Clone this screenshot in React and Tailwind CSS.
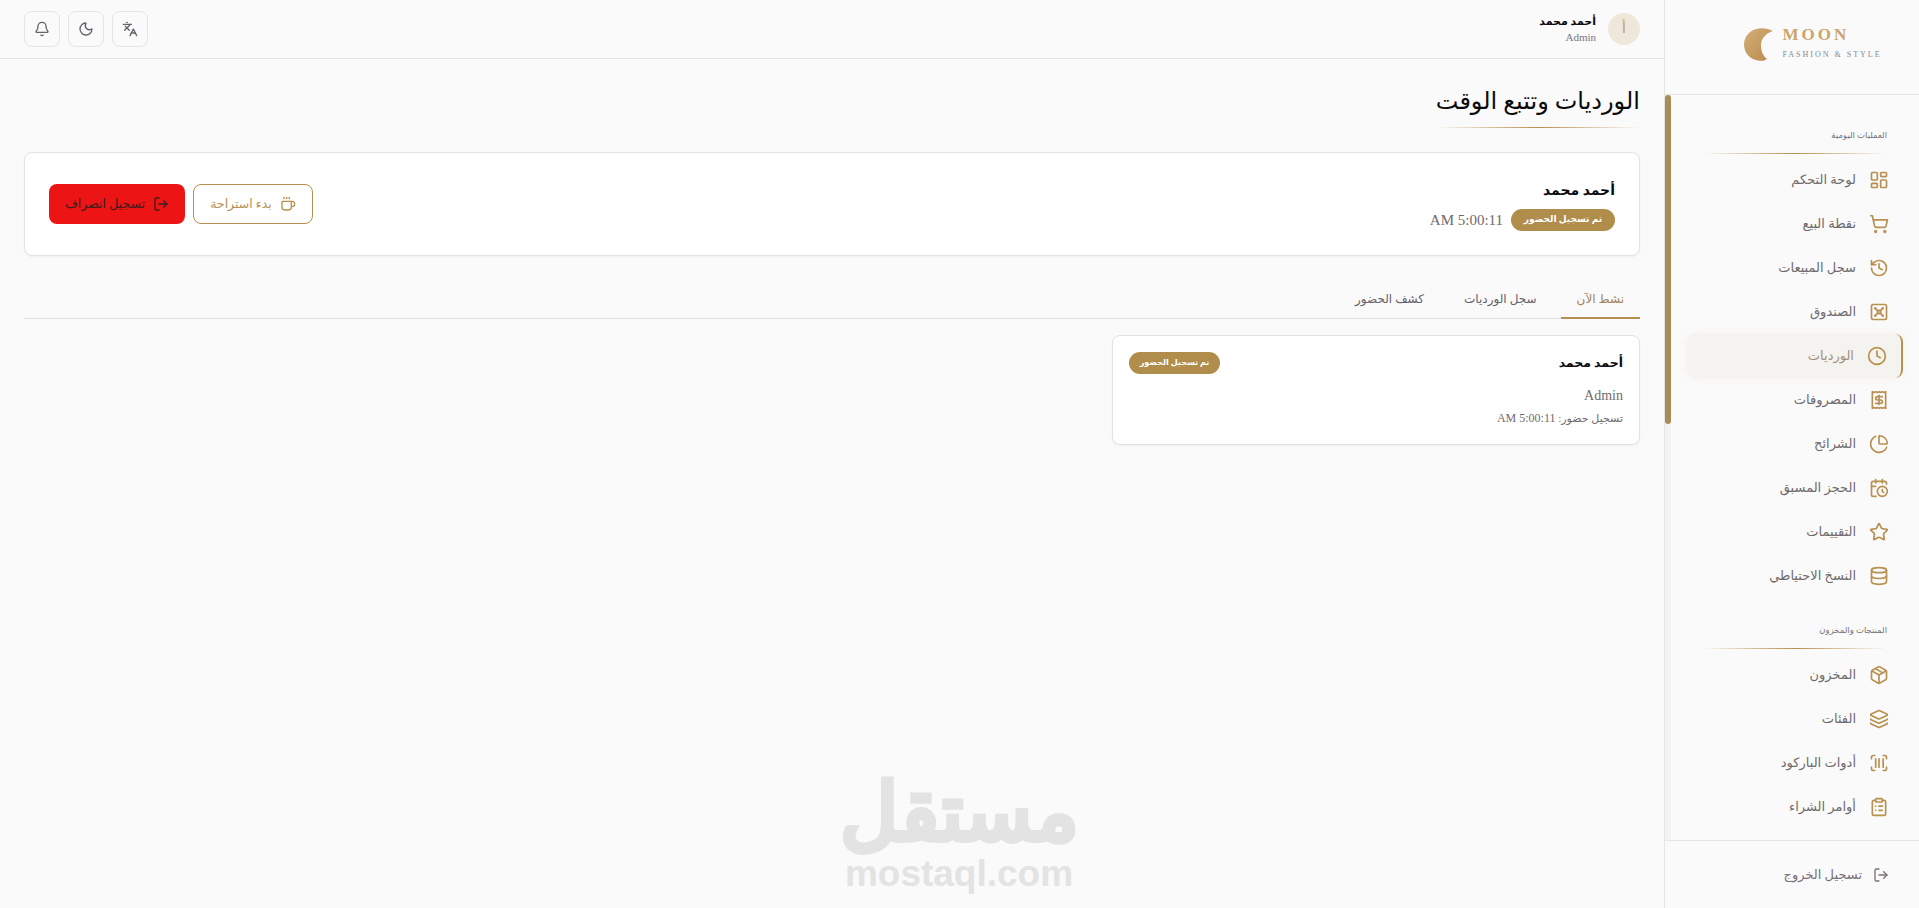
import {
  Bell, Moon, Languages, Coffee, LogOut, LayoutDashboard, ShoppingCart, History, Vault, Clock,
  Receipt, PieChart, CalendarClock, Star, Database, Package, Layers, ScanBarcode, ClipboardList,
} from "lucide-react";

const daily = [
  ["لوحة التحكم", LayoutDashboard],
  ["نقطة البيع", ShoppingCart],
  ["سجل المبيعات", History],
  ["الصندوق", Vault],
  ["الورديات", Clock, true],
  ["المصروفات", Receipt],
  ["الشرائح", PieChart],
  ["الحجز المسبق", CalendarClock],
  ["التقييمات", Star],
  ["النسخ الاحتياطي", Database],
];

const products = [
  ["المخزون", Package],
  ["الفئات", Layers],
  ["أدوات الباركود", ScanBarcode],
  ["أوامر الشراء", ClipboardList],
];

function NavItem({ label, icon: Icon, active }) {
  if (active) {
    return (
      <a className="flex h-11 items-center gap-[13px] rounded-lg border-r-2 border-[#b8904f] bg-[#f5f3ef] pr-[14px] pl-4 text-[13px] text-[#a3927a] shadow-[0_0_8px_rgba(176,141,75,0.08)]">
        <Icon size={20} className="text-[#b8904f]" />
        <span>{label}</span>
      </a>
    );
  }
  return (
    <a className="flex h-11 items-center gap-[13px] rounded-lg pr-[14px] pl-4 text-[13px] text-[#6f6a6c]">
      <Icon size={20} className="text-[#b8904f]" />
      <span>{label}</span>
    </a>
  );
}

function Section({ title, items, className }) {
  return (
    <div className={className}>
      <div className="px-4 text-[8.5px] leading-4 text-[#77727a]">{title}</div>
      <div className="mx-4 mt-[10px] mb-1 h-px bg-gradient-to-l from-transparent via-[#b8904f] to-transparent" />
      {items.map(([label, icon, active]) => (
        <NavItem key={label} label={label} icon={icon} active={active} />
      ))}
    </div>
  );
}

function IconButton({ icon: Icon }) {
  return (
    <button className="flex h-9 w-9 items-center justify-center rounded-lg border border-[#e5e5e5] bg-[#fafafa] text-[#66616a]">
      <Icon size={16} />
    </button>
  );
}

function Badge({ className, children }) {
  return (
    <span className={"inline-flex items-center justify-center rounded-full bg-[#b08d4b] font-bold text-white " + className}>
      {children}
    </span>
  );
}

export default function App() {
  return (
    <div
      dir="rtl"
      className="relative flex h-screen overflow-hidden bg-[#fafafa] text-[#0a0a0a] [font-family:'Liberation_Serif','DejaVu_Sans',serif]"
    >
      {/* sidebar */}
      <aside className="flex h-full w-[255px] shrink-0 flex-col border-l border-[#e5e5e5]">
        <div dir="ltr" className="flex h-[95px] shrink-0 items-start justify-center gap-[9px] border-b border-[#e5e5e5] pt-7 pl-[42px]">
          <svg width="29" height="33" viewBox="0 0 29 33">
            <defs>
              <linearGradient id="moon" x1="0" y1="0" x2="1" y2="1">
                <stop offset="0" stopColor="#d4b07a" />
                <stop offset="1" stopColor="#b8894a" />
              </linearGradient>
            </defs>
            <path d="M15 0.5 C20 0 25 1 28.5 3 C21 6 17 11 17 17 C17 23 19 28 23 31 C20 33 17 33 14 32.5 C6 31.5 0 25 0 16.5 C0 8 7 1 15 0.5 Z" fill="url(#moon)" />
          </svg>
          <div className="-mt-[2px]">
            <div className="text-[17px] leading-[17px] font-bold tracking-[3px] text-[#cba56c]">MOON</div>
            <div className="mt-[8px] text-[8px] leading-[8px] tracking-[2px] text-[#7f8896]">FASHION &amp; STYLE</div>
          </div>
        </div>

        <div className="flex min-h-0 flex-1">
          <nav className="min-w-0 flex-1 px-4 pt-8">
            <Section title="العمليات اليومية" items={daily} />
            <Section title="المنتجات والمخزون" items={products} className="mt-6" />
          </nav>
          <div className="w-[6px] shrink-0 bg-[#f3f3f3]">
            <div className="h-[329px] rounded-full bg-[#a88c55]" />
          </div>
        </div>

        <div className="flex h-[68px] shrink-0 items-center gap-[11px] border-t border-[#e5e5e5] pr-[30px] text-[13px] text-[#7a7078]">
          <LogOut size={16} />
          <span>تسجيل الخروج</span>
        </div>
      </aside>

      {/* main */}
      <main className="flex min-w-0 flex-1 flex-col">
        <header className="flex h-[59px] shrink-0 items-center justify-between border-b border-[#e5e5e5] px-6">
          <div className="flex items-center gap-3">
            <div className="flex h-8 w-8 items-center justify-center rounded-full bg-[#efe7da] text-sm text-[#c29d62]">أ</div>
            <div>
              <div className="text-[11px] leading-4 font-bold">أحمد محمد</div>
              <div className="text-[11px] leading-4 text-[#7a7480]">Admin</div>
            </div>
          </div>
          <div className="flex items-center gap-2">
            <IconButton icon={Languages} />
            <IconButton icon={Moon} />
            <IconButton icon={Bell} />
          </div>
        </header>

        <div className="flex-1 p-6">
          <div className="w-fit">
            <h1 className="text-2xl leading-9">الورديات وتتبع الوقت</h1>
            <div className="mt-2 h-px bg-gradient-to-l from-transparent via-[#b8904f] to-transparent" />
          </div>

          <div className="mt-6 flex items-center justify-between rounded-lg border border-[#e2e2e2] bg-white p-6 shadow-xs">
            <div>
              <div className="text-sm leading-7 font-bold">أحمد محمد</div>
              <div className="mt-1 flex items-center gap-2">
                <Badge className="h-[22px] w-[104px] text-[9px]">تم تسجيل الحضور</Badge>
                <span className="text-[15px] leading-[22px] text-[#6f6a6c]">5:00:11 AM</span>
              </div>
            </div>
            <div className="flex gap-2">
              <button className="flex h-10 w-[120px] items-center justify-center gap-2 rounded-lg border border-[#b8904f] bg-white text-[12.5px] text-[#b8904f]">
                <Coffee size={16} />
                بدء استراحة
              </button>
              <button className="flex h-10 w-[136px] items-center justify-center gap-2 rounded-lg bg-[#ec1414] text-[12.5px] text-[#3f1c1c]">
                <LogOut size={16} />
                تسجيل انصراف
              </button>
            </div>
          </div>

          <div className="mt-6 flex gap-2 border-b border-[#e2e2e2]">
            <button className="-mb-px h-[39px] border-b-2 border-[#b8904f] px-4 text-xs text-[#a3845a]">نشط الآن</button>
            <button className="h-[38px] px-4 text-xs text-[#66616a]">سجل الورديات</button>
            <button className="h-[38px] px-4 text-xs text-[#66616a]">كشف الحضور</button>
          </div>

          <div className="mt-4 grid grid-cols-3 gap-4">
            <div className="rounded-lg border border-[#e2e2e2] bg-white p-4 shadow-xs">
              <div className="flex items-center justify-between">
                <div className="text-[12.5px] font-bold">أحمد محمد</div>
                <Badge className="h-[22px] w-[91px] text-[8px]">تم تسجيل الحضور</Badge>
              </div>
              <div className="mt-3 text-sm leading-5 text-[#6f6a6c]">Admin</div>
              <div className="mt-[2px] text-[11px] leading-5 text-[#6f6a6c]">
                تسجيل حضور: <span className="text-xs">5:00:11 AM</span>
              </div>
            </div>
          </div>
        </div>
      </main>

      {/* watermark */}
      <div dir="ltr" className="absolute top-[771px] left-[844px] flex w-[230px] flex-col items-center font-['Liberation_Sans'] text-[#e3e3e3]">
        <div dir="rtl" className="text-[80px] leading-[84px] font-bold [-webkit-text-stroke:3px_#e3e3e3]">مستقل</div>
        <div className="text-[37px] leading-[38px] font-bold">mostaql.com</div>
      </div>
    </div>
  );
}
